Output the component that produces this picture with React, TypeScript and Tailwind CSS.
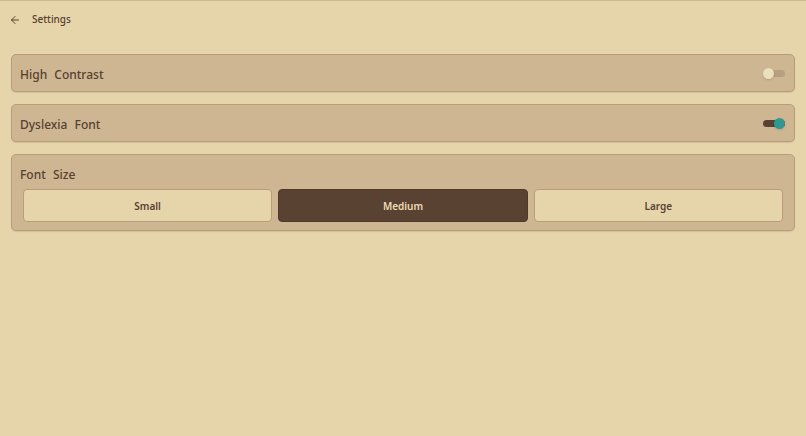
import { ArrowLeft } from "lucide-react"

function Toggle({ on }: { on: boolean }) {
  return (
    <div className="relative h-[10px] w-[22px] flex items-center">
      <div className={on ? "h-[7px] w-full rounded-full bg-[#5a4233]" : "h-[7px] w-full rounded-full bg-[#b5a082]"} />
      <div
        className={
          on
            ? "absolute right-0 h-[11px] w-[11px] rounded-full bg-[#2e9990] shadow-sm"
            : "absolute left-0 h-[11px] w-[11px] rounded-full bg-[#ecdfbd] shadow-sm"
        }
      />
    </div>
  )
}

function SwitchRow({ label, on }: { label: string; on: boolean }) {
  return (
    <div className="flex h-[38px] items-center justify-between rounded-[5px] border border-[#b89d7a] bg-[#cfb693] pl-[8px] pr-[9px] shadow-[0_1px_1px_rgba(90,66,51,0.15)]">
      <span className="pt-[3px] text-[12px] font-medium text-[#56402f] [word-spacing:4px]">{label}</span>
      <Toggle on={on} />
    </div>
  )
}

export default function App() {
  const sizes = ["Small", "Medium", "Large"]
  const active = "Medium"

  return (
    <div
      className="h-[436px] w-full border-t border-[#cdb990] bg-[#e6d5ab] text-[#56402f]"
      style={{ fontFamily: '"Noto Sans", "DejaVu Sans", sans-serif' }}
    >
      <div className="flex h-[37px] items-center gap-[11px] pl-[9px]">
        <ArrowLeft className="h-[12px] w-[12px]" strokeWidth={2} />
        <span className="text-[10px] font-medium">Settings</span>
      </div>

      <div className="flex flex-col gap-[12px] px-[11px] pt-[16px]">
        <SwitchRow label="High Contrast" on={false} />
        <SwitchRow label="Dyslexia Font" on={true} />

        <div className="rounded-[5px] border border-[#b89d7a] bg-[#cfb693] px-[11px] pb-[8px] pt-[11px] shadow-[0_1px_1px_rgba(90,66,51,0.15)]">
          <div className="ml-[-3px] text-[12px] font-medium [word-spacing:4px]">Font Size</div>
          <div className="mt-[5px] grid grid-cols-3 gap-[6px]">
            {sizes.map((s) => (
              <button
                key={s}
                className={
                  s === active
                    ? "h-[33px] rounded-[4px] border border-[#4d382b] bg-[#5a4233] pt-[1px] text-[10px] font-semibold text-[#ecdcb4]"
                    : "h-[33px] rounded-[4px] border border-[#b89d7a] bg-[#e6d5ab] pt-[1px] text-[10px] font-semibold text-[#5a4233]"
                }
              >
                {s}
              </button>
            ))}
          </div>
        </div>
      </div>
    </div>
  )
}
